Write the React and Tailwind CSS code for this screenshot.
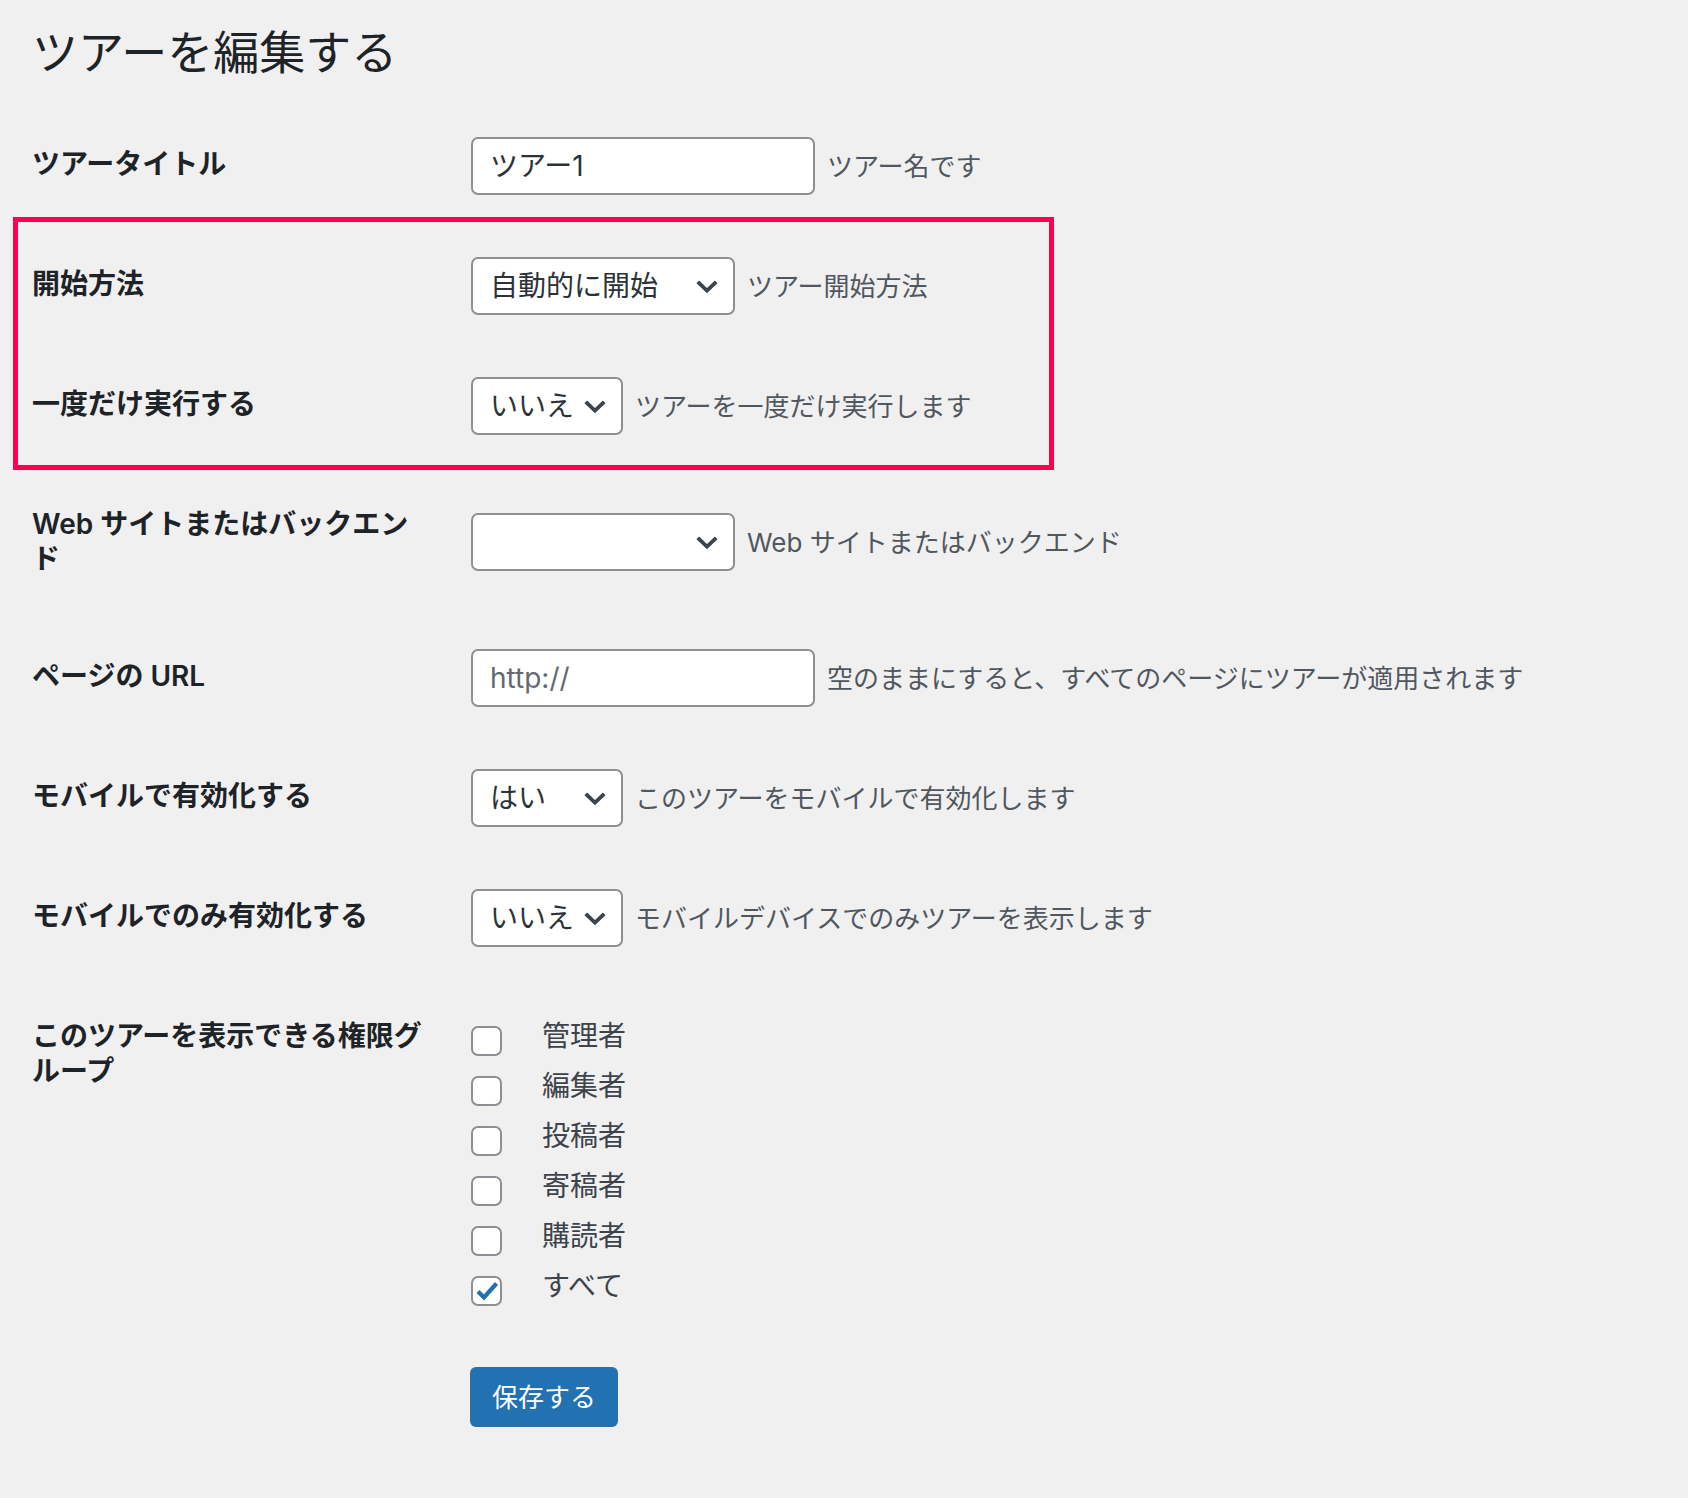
import React from "react";

function Chevron() {
  return (
    <svg width="22" height="13" viewBox="0 0 22 13" className="shrink-0">
      <path d="M1.8 1.8 L11 10.6 L20.2 1.8" fill="none" stroke="#3c434a" strokeWidth="3.8" />
    </svg>
  );
}

function Select({ value, width }) {
  return (
    <div
      className={`flex h-[58px] shrink-0 items-center justify-between rounded-[7px] border-2 border-[#8c8f94] bg-white pl-[17px] pr-[15px] text-[28px] text-[#2c3338] ${width}`}
    >
      <span>{value}</span>
      <Chevron />
    </div>
  );
}

function TextInput({ value, placeholder }) {
  return (
    <div className="flex h-[58px] w-[344px] shrink-0 items-center rounded-[7px] border-2 border-[#8c8f94] bg-white pl-[17px] text-[28px]">
      {value ? (
        <span className="text-[#2c3338]">{value}</span>
      ) : (
        <span className="text-[#646970]">{placeholder}</span>
      )}
    </div>
  );
}

function Row({ label, children, desc }) {
  return (
    <div className="flex">
      <div className="w-[439px] shrink-0 py-[41px] pr-[49px] text-[28px] font-semibold leading-[35px] text-[#1d2327]">
        {label}
      </div>
      <div className="flex items-center gap-[12px] py-[31px]">
        {children}
        {desc && <span className="text-[26px] text-[#50575e]">{desc}</span>}
      </div>
    </div>
  );
}

function Checkbox({ label, checked }) {
  return (
    <div className="flex h-[50px] items-start gap-[40px]">
      <div className="mt-[7px] flex h-[30px] w-[31px] items-center justify-center rounded-[7px] border-2 border-[#8c8f94] bg-white">
        {checked && (
          <svg width="26" height="26" viewBox="0 0 26 26">
            <path d="M4 13.5 L10 19.5 L22.5 5.5" fill="none" stroke="#2271b1" strokeWidth="4.2" />
          </svg>
        )}
      </div>
      <span className="text-[28px] leading-[35px] text-[#3c434a]">{label}</span>
    </div>
  );
}

const roles = ["管理者", "編集者", "投稿者", "寄稿者", "購読者"];

export default function App() {
  return (
    <div className="min-h-[1498px] w-full bg-[#f0f0f1] pl-[32px] font-[Inter,'Noto_Sans_CJK_JP',sans-serif]">
      <h1 className="pt-[23px] pb-[25px] text-[46px] font-normal leading-[58px] text-[#1d2327]">
        ツアーを編集する
      </h1>

      <Row label="ツアータイトル" desc="ツアー名です">
        <TextInput value="ツアー1" />
      </Row>

      <div className="relative">
        <div className="absolute -top-[9px] -left-[19px] h-[253px] w-[1041px] border-[5px] border-[#ff0050]" />
        <Row label="開始方法" desc="ツアー開始方法">
          <Select value="自動的に開始" width="w-[264px]" />
        </Row>
        <Row label="一度だけ実行する" desc="ツアーを一度だけ実行します">
          <Select value="いいえ" width="w-[152px]" />
        </Row>
      </div>

      <Row
        label={
          <>
            Web サイトまたはバックエン
            <br />ド
          </>
        }
        desc="Web サイトまたはバックエンド"
      >
        <Select value="" width="w-[264px]" />
      </Row>

      <Row label="ページの URL" desc="空のままにすると、すべてのページにツアーが適用されます">
        <TextInput placeholder="http://" />
      </Row>

      <Row label="モバイルで有効化する" desc="このツアーをモバイルで有効化します">
        <Select value="はい" width="w-[152px]" />
      </Row>

      <Row label="モバイルでのみ有効化する" desc="モバイルデバイスでのみツアーを表示します">
        <Select value="いいえ" width="w-[152px]" />
      </Row>

      <div className="flex">
        <div className="w-[439px] shrink-0 py-[41px] pr-[49px] text-[28px] font-semibold leading-[35px] text-[#1d2327]">
          このツアーを表示できる権限グ
          <br />
          ループ
        </div>
        <div className="flex flex-col pt-[41px]">
          {roles.map((r) => (
            <Checkbox key={r} label={r} />
          ))}
          <Checkbox label="すべて" checked />
        </div>
      </div>

      <div className="ml-[438px] mt-[48px] pb-[70px]">
        <button className="flex h-[60px] w-[148px] items-center justify-center rounded-[6px] bg-[#2271b1] text-[26px] text-white">
          保存する
        </button>
      </div>
    </div>
  );
}
